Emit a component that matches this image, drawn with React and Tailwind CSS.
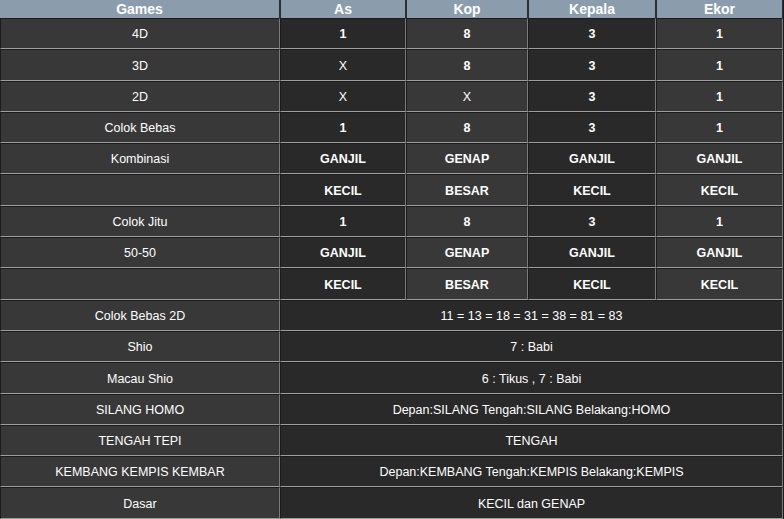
import React from 'react';

const heads = ['Games', 'As', 'Kop', 'Kepala', 'Ekor'];

const rows = [
    { label: '4D', vals: ['1', '8', '3', '1'] },
    { label: '3D', vals: ['X', '8', '3', '1'] },
    { label: '2D', vals: ['X', 'X', '3', '1'] },
    { label: 'Colok Bebas', vals: ['1', '8', '3', '1'] },
    { label: 'Kombinasi', vals: ['GANJIL', 'GENAP', 'GANJIL', 'GANJIL'] },
    { label: '', vals: ['KECIL', 'BESAR', 'KECIL', 'KECIL'] },
    { label: 'Colok Jitu', vals: ['1', '8', '3', '1'] },
    { label: '50-50', vals: ['GANJIL', 'GENAP', 'GANJIL', 'GANJIL'] },
    { label: '', vals: ['KECIL', 'BESAR', 'KECIL', 'KECIL'] },
    { label: 'Colok Bebas 2D', span: '11 = 13 = 18 = 31 = 38 = 81 = 83' },
    { label: 'Shio', span: '7 : Babi' },
    { label: 'Macau Shio', span: '6 : Tikus , 7 : Babi' },
    { label: 'SILANG HOMO', span: 'Depan:SILANG Tengah:SILANG Belakang:HOMO' },
    { label: 'TENGAH TEPI', span: 'TENGAH' },
    { label: 'KEMBANG KEMPIS KEMBAR', span: 'Depan:KEMBANG Tengah:KEMPIS Belakang:KEMPIS' },
    { label: 'Dasar', span: 'KECIL dan GENAP' },
];

// dark top/left edge, lighter right/bottom edge on every body cell
const cell = 'h-[31.3px] p-0 pt-[2px] text-center align-middle text-[12.5px] border-t border-l border-r border-b border-t-[#1c1c1c] border-l-[#1c1c1c] border-r-[#7a7a7a] border-b-[#9e9e9e]';
const light = 'bg-[#383838]';
const dark = 'bg-[#292929]';

const App = () => {
    return (
        <div className="w-[784px] h-[519px] overflow-hidden bg-[#1c1c1c] text-white" style={{ fontFamily: '"Liberation Sans", Arial, sans-serif' }}>
            <table className="table-fixed border-separate border-spacing-0 w-[783px]">
                <colgroup>
                    <col className="w-[280px]" />
                    <col className="w-[126px]" />
                    <col className="w-[122px]" />
                    <col className="w-[128px]" />
                    <col className="w-[127px]" />
                </colgroup>
                <thead>
                    <tr>
                        {heads.map((h, i) => (
                            <th
                                key={h}
                                className={`h-[18px] p-0 bg-[#8b9dac] text-white text-[14px] leading-[18px] font-bold text-center border-r border-r-[#2a3038] ${i > 0 ? 'border-l border-l-[#2a3038]' : ''}`}
                            >
                                {h}
                            </th>
                        ))}
                    </tr>
                </thead>
                <tbody>
                    {rows.map((r, i) => (
                        <tr key={i}>
                            <td className={`${cell} ${light}`}>{r.label}</td>
                            {r.span ? (
                                <td colSpan={4} className={`${cell} ${dark}`}>{r.span}</td>
                            ) : (
                                r.vals.map((v, j) => (
                                    <td key={j} className={`${cell} ${j % 2 === 0 ? dark : light} ${v === 'X' ? 'font-normal' : 'font-bold'}`}>
                                        {v}
                                    </td>
                                ))
                            )}
                        </tr>
                    ))}
                </tbody>
            </table>
        </div>
    );
};

export default App;
